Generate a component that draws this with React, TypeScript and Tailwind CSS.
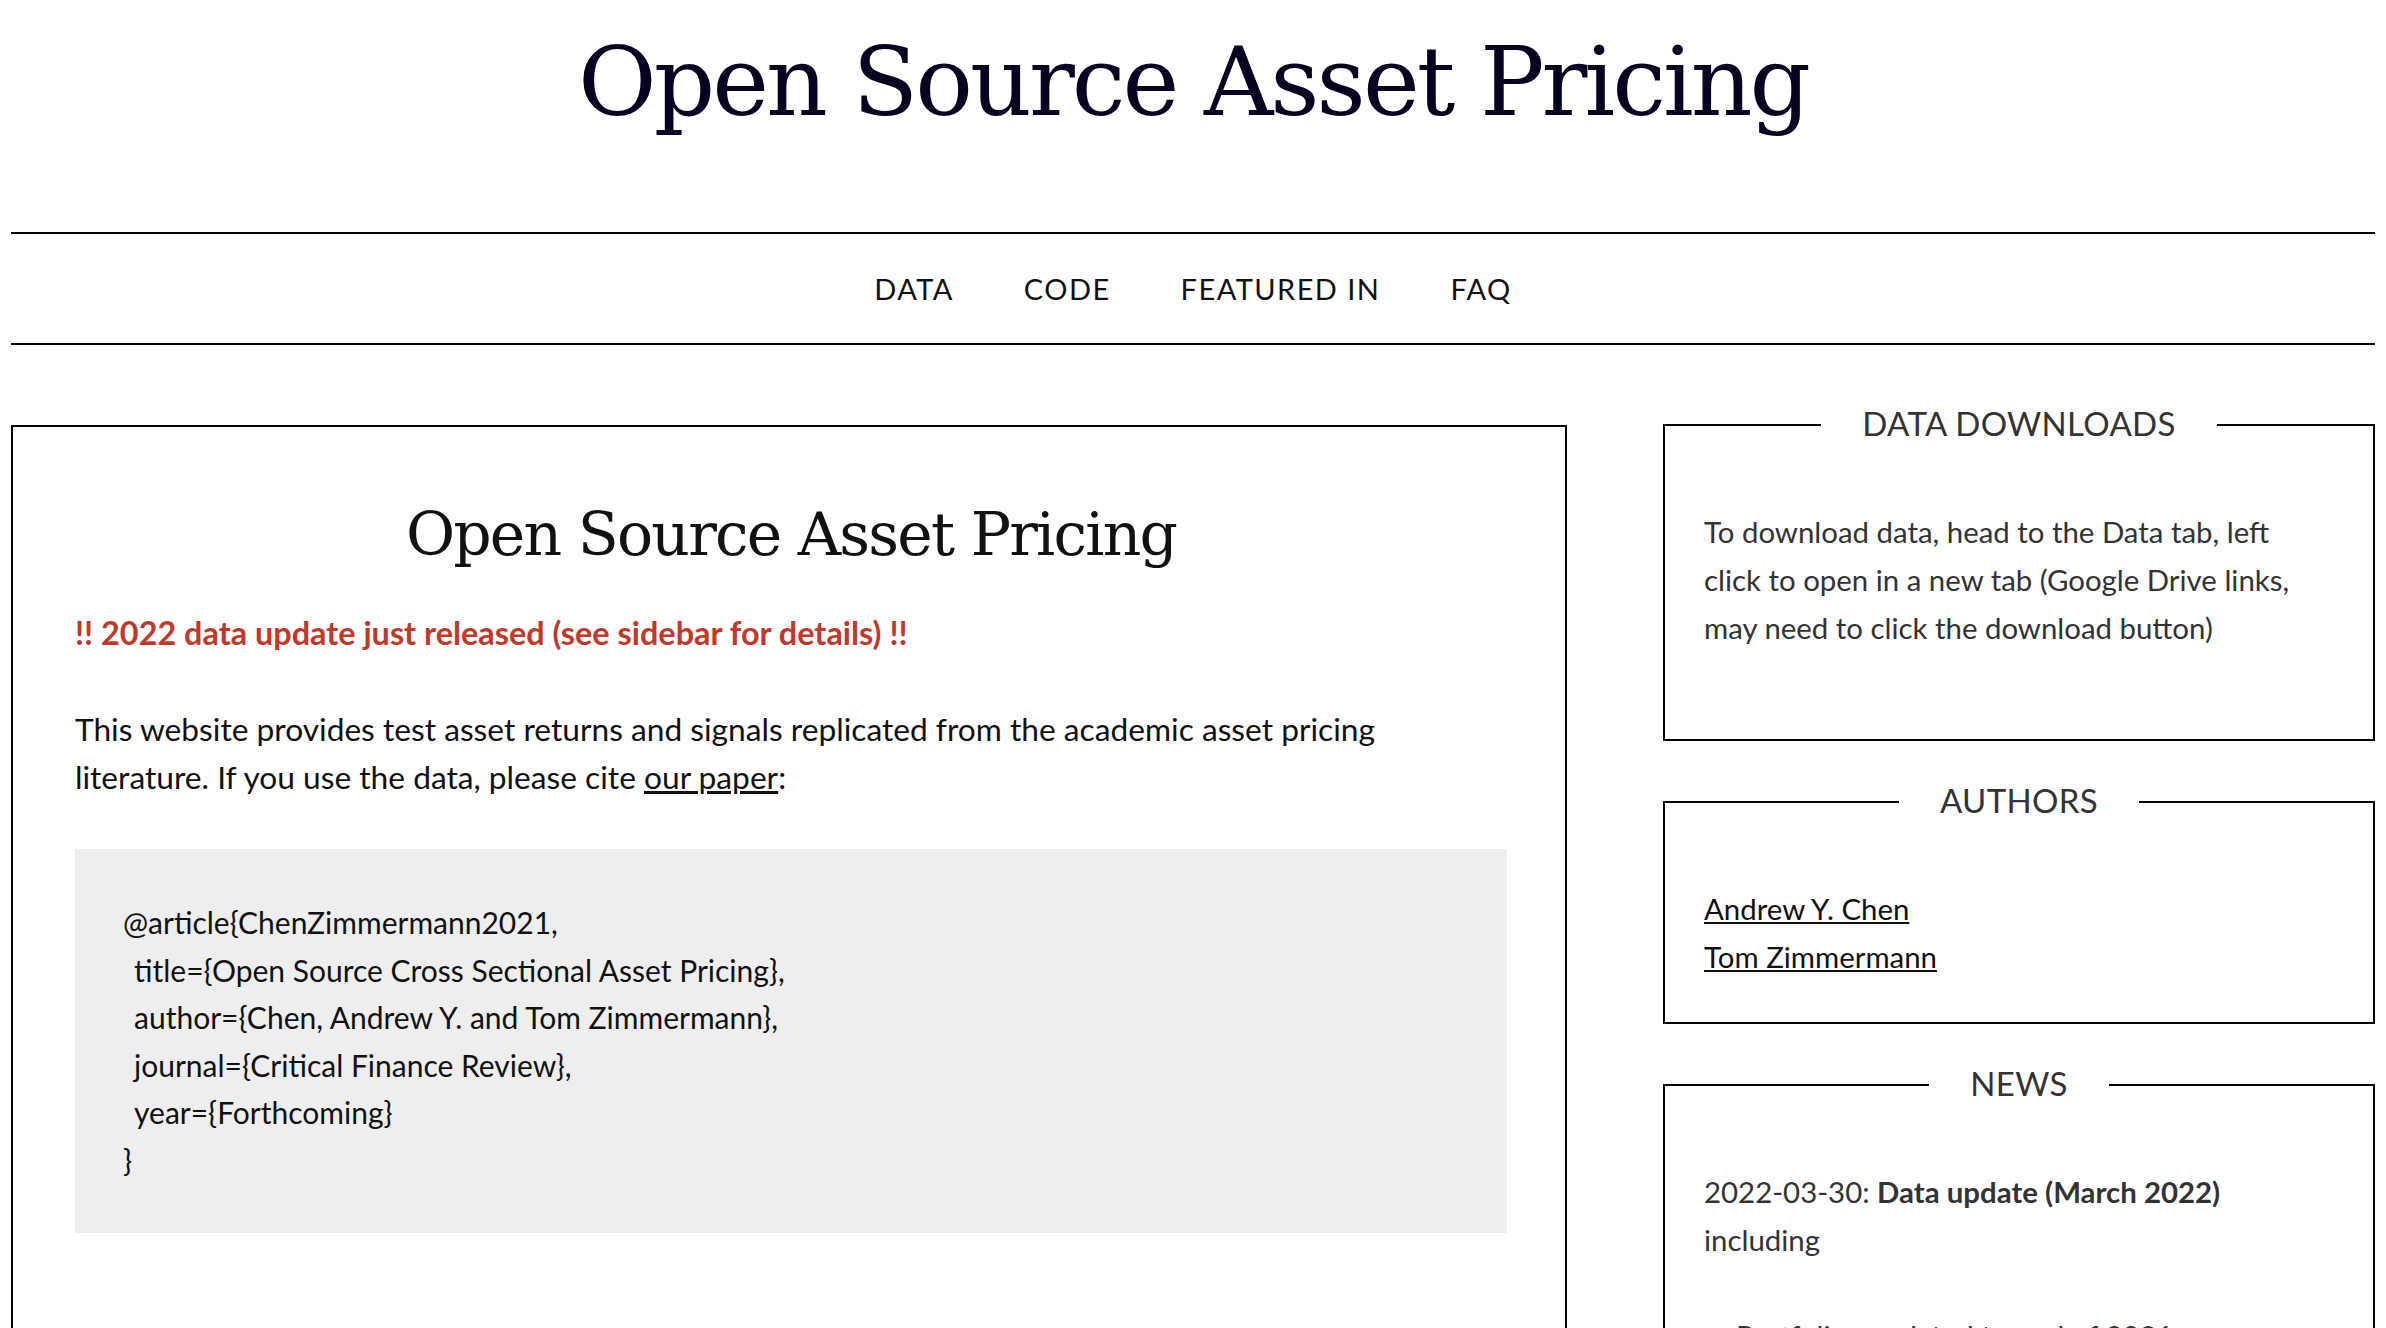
import React from 'react'

const navItems = ['DATA', 'CODE', 'FEATURED IN', 'FAQ']

const bibtex = [
  '@article{ChenZimmermann2021,',
  ' title={Open Source Cross Sectional Asset Pricing},',
  ' author={Chen, Andrew Y. and Tom Zimmermann},',
  ' journal={Critical Finance Review},',
  ' year={Forthcoming}',
  '}',
]

// sidebar widget: a bordered box with its title sitting in the top border
function SideBox({ title, bodyClass, children }: { title: string; bodyClass: string; children: React.ReactNode }) {
  return (
    <section>
      <div className="flex">
        <div className="mt-[17px] flex-1 border-l-2 border-t-2 border-black" />
        <h2 className="px-[41px] text-[33px] leading-none tracking-[0.01em] text-[#333]">{title}</h2>
        <div className="mt-[17px] flex-1 border-r-2 border-t-2 border-black" />
      </div>
      <div className={bodyClass}>{children}</div>
    </section>
  )
}

export default function App() {
  return (
    <div className="min-h-screen bg-white font-['Lato',sans-serif] text-[#111]">
      <div className="mx-[11px]">
        <header className="h-[234px] border-b-2 border-black pt-[34px] text-center">
          <h1 className="font-['DejaVu_Serif',serif] text-[96px] leading-none tracking-[-0.031em] text-[#040421]">
            Open Source Asset Pricing
          </h1>
        </header>

        <nav className="flex h-[111px] items-center justify-center gap-[70px] border-b-2 border-black">
          {navItems.map((item) => (
            <a key={item} className="text-[29px] leading-none tracking-[0.05em] text-[#111]">
              {item}
            </a>
          ))}
        </nav>

        <div className="mt-[62px] flex items-start gap-[96px]">
          <main className="mt-[18px] h-[1000px] w-[1556px] shrink-0 border-2 border-black pl-[62px] pr-[58px] pt-[77px]">
            <h1 className="text-center font-['DejaVu_Serif',serif] text-[60px] leading-none tracking-[-0.03em] text-[#111]">
              Open Source Asset Pricing
            </h1>
            <p className="mt-[45px] text-[32.4px] font-bold leading-[48px] text-[#c0392b]">
              !! 2022 data update just released (see sidebar for details) !!
            </p>
            <p className="mt-[48px] max-w-[1360px] text-[31.7px] leading-[48px]">
              This website provides test asset returns and signals replicated from the academic asset pricing
              literature. If you use the data, please cite{' '}
              <a className="underline">our paper</a>:
            </p>
            <div className="mt-[48px] bg-[#eeeeee] pb-[49px] pl-[48px] pt-[50px] text-[30px] leading-[47.5px]">
              {bibtex.map((line, i) => (
                <div key={i} className={line.startsWith(' ') ? 'pl-[11px]' : ''}>
                  {line.trim()}
                </div>
              ))}
            </div>
          </main>

          <aside className="flex w-[712px] flex-col gap-[43px] text-[29.4px] leading-[48px] text-[#333]">
            <SideBox title="DATA DOWNLOADS" bodyClass="border-x-2 border-b-2 border-black px-[39px] pb-[87px] pt-[68px]">
              <p className="max-w-[610px]">
                To download data, head to the Data tab, left click to open in a new tab (Google Drive links, may
                need to click the download button)
              </p>
            </SideBox>

            <SideBox title="AUTHORS" bodyClass="border-x-2 border-b-2 border-black px-[39px] pb-[41px] pt-[68px]">
              <a className="block text-[#111] underline">Andrew Y. Chen</a>
              <a className="block text-[#111] underline">Tom Zimmermann</a>
            </SideBox>

            <SideBox title="NEWS" bodyClass="border-x-2 border-b-2 border-black px-[39px] pb-[60px] pt-[68px]">
              <p className="max-w-[610px]">
                2022-03-30: <b className="font-bold">Data update (March 2022)</b> including
              </p>
              <ul className="mt-[48px] list-disc pl-[32px]">
                <li>Portfolios updated to end of 2021</li>
                <li>Signals updated to end of 2021</li>
              </ul>
            </SideBox>
          </aside>
        </div>
      </div>
    </div>
  )
}
